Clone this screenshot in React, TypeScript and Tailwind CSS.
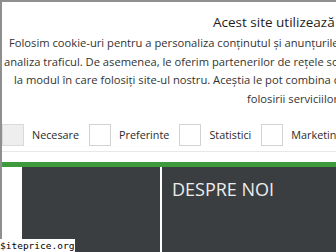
const bodyLines = [
  { text: "Folosim cookie-uri pentru a personaliza conținutul și anunțurile, pentru a oferi funcții", pad: "pl-[7px]" },
  { text: "analiza traficul. De asemenea, le oferim partenerilor de rețele sociale, de publicitate", pad: "pl-[2px]" },
  { text: "la modul în care folosiți site-ul nostru. Aceștia le pot combina cu alte informații", pad: "pl-[12px]" },
  { text: "folosirii serviciilor lor.", pad: "pl-[245px]" },
];

const options = [
  { label: "Necesare", locked: true },
  { label: "Preferinte", locked: false },
  { label: "Statistici", locked: false },
  { label: "Marketing", locked: false },
];

export default function App() {
  return (
    <div className="relative w-[336px] h-[252px] overflow-hidden">
      <div className="flex flex-col h-full bg-white border-l-2 border-t-2 border-[#8f8f8f] font-['Open_Sans',sans-serif]">
        <div className="pt-[10px] pl-[211px] text-[13.5px] leading-[20px] text-[#1e1e1e] whitespace-nowrap overflow-hidden">
          Acest site utilizează cookie-uri
        </div>
        <div className="mt-[2px] text-[11.2px] leading-[18.5px] text-[#333]">
          {bodyLines.map((l) => (
            <div key={l.text} className={`${l.pad} whitespace-nowrap overflow-hidden`}>
              {l.text}
            </div>
          ))}
        </div>
        <div className="mt-[16px] flex items-center whitespace-nowrap">
          {options.map((o) => (
            <div key={o.label} className="flex items-center shrink-0 mr-[10px]">
              <span
                className={`w-[22px] h-[22px] border ${
                  o.locked ? "bg-[#eeeeee] border-[#dadada]" : "bg-white border-[#d2d2d2]"
                }`}
              />
              <span className="ml-[8px] text-[10.8px] text-[#2a2a2a]">{o.label}</span>
            </div>
          ))}
        </div>
        <div className="mt-[5px] border-t border-[#e8e8e8]" />
        <div className="mt-[10px] h-[5px] bg-[#3d9b3d]" />
        <div className="flex flex-1">
          <div className="w-[20px] bg-white" />
          <div className="flex flex-1 bg-[#3b3e41]">
            <div className="w-[138px]" />
            <div className="w-[2px] bg-white" />
            <div className="flex-1 pl-[10px] pt-[10px] text-[18px] leading-[24px] text-[#ececec] whitespace-nowrap">
              DESPRE NOI
            </div>
          </div>
        </div>
      </div>
      <div className="absolute left-0 bottom-0 bg-white pr-[1px] text-[9.5px] leading-[13px] text-black font-['DejaVu_Sans_Mono',monospace]">
        $iteprice.org
      </div>
    </div>
  );
}
